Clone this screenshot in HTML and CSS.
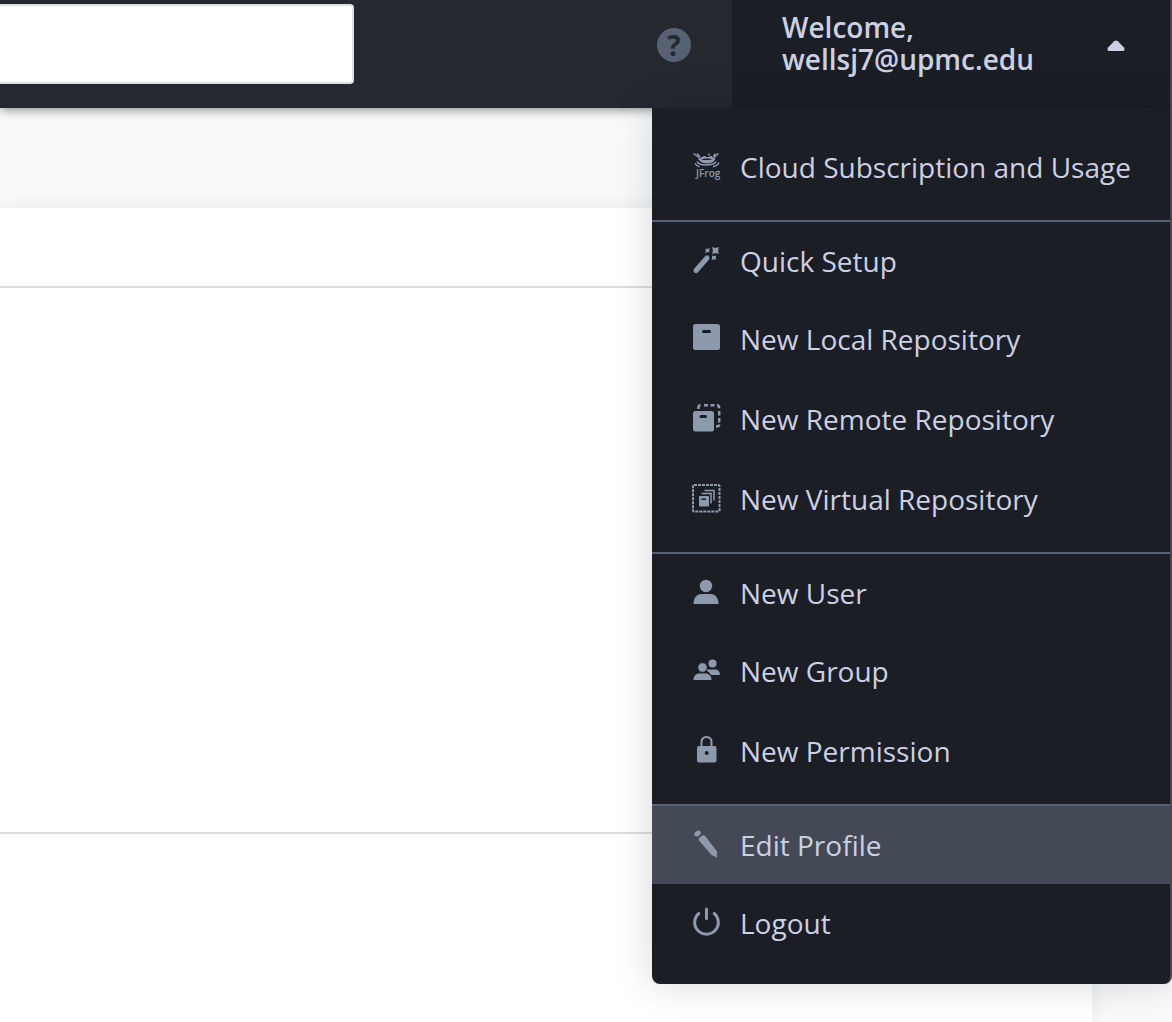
FILE: index.html
```html
<!DOCTYPE html>
<html lang="en">
<head>
<meta charset="utf-8">
<title>Profile menu</title>
<meta name="viewport" content="width=device-width, initial-scale=1">
<link rel="stylesheet" href="styles.css">
</head>
<body>
<header class="topbar">
  <input class="search" type="search" aria-label="Search">
  <button class="help" type="button" aria-label="Help">?</button>
  <div class="account">
    <button class="account-toggle" type="button" aria-expanded="true">
      <span class="account-name">Welcome, wellsj7@upmc.edu</span>
      <svg class="caret" viewBox="0 0 18 12" aria-hidden="true"><path d="M7.200 1.200Q9 0 10.800 1.200L17 7.500Q18.500 11 15.500 11H2.500Q-.5 11 1 7.500Z"/></svg>
    </button>
    <nav class="menu" aria-label="Account">
      <ul class="group">
        <li><a class="item" href="#">
          <svg class="icon" viewBox="0 0 28 28" aria-hidden="true"><path d="M6 7q1.500-2 4-1.800L11.500 4h1.500l1 1h3l1-1h2l.5 1.200Q23 5.500 23.500 7L21 10q-6 3-12 0z"/><path class="cut" d="M9 7.200q5.500-1.200 11.500 0-5.500 1.800-11.500 0z"/><path class="line thin" d="M1.500 1.500l5.500 4M5 1.500l3 3.500M26.500 1.500l-4.500 4M23.500 1.500l-2 3M5 9.500c1 2.500 4.500 3.500 9 3.500s9-1 10-3.500M3 11.500c1 2 2.500 2.500 4.500 3.300M27 10.500c-1 2.500-3 3.300-6 4.200"/><circle cx="17" cy="2.500" r="1"/><text x="4" y="25">JFrog</text></svg>
          <span>Cloud Subscription and Usage</span></a></li>
      </ul>
      <ul class="group">
        <li><a class="item" href="#">
          <svg class="icon" viewBox="0 0 28 28" aria-hidden="true"><path class="line stick" d="M4 24.500L15 12"/><path d="M20 1l2.300.7h2.400L27 1l-.7 2.300v2.400L27 8l-2.300-.7h-2.400L20 8l.7-2.300V3.300zM13.500 2.500l2 .6L18 2l-.9 2.500.6 2-2-.4-2.700.9.800-2.500zM20 9.500l2 .5 2.300-.6-.6 2.300.4 2-2.200-.4-2.400.7.6-2.300z"/></svg>
          <span>Quick Setup</span></a></li>
        <li><a class="item" href="#">
          <svg class="icon" viewBox="0 0 28 28" aria-hidden="true"><rect x="1" y="0" width="27" height="26" rx="2.500"/><rect class="cut" x="10" y="6" width="9" height="3" rx="1.500"/></svg>
          <span>New Local Repository</span></a></li>
        <li><a class="item" href="#">
          <svg class="icon" viewBox="0 0 28 28" aria-hidden="true"><rect x="1" y="7" width="21" height="20.500" rx="2.500"/><rect class="cut" x="7.500" y="11" width="7.500" height="3" rx="1.500"/><path class="line bold" d="M6.500 5V3Q6.500 1.300 8.500 1.300M12 1.300h4M18.500 1.300h4M25 1.300q2.200 0 2.200 3M27.200 7v4.500M27.200 14v4.500M27.200 20.500q0 2-3.200 2"/></svg>
          <span>New Remote Repository</span></a></li>
        <li><a class="item" href="#">
          <svg class="icon" viewBox="0 0 28 28" aria-hidden="true"><rect class="line dashed" x="1" y="1" width="26.500" height="26.500" rx="1"/><rect x="7" y="12" width="10" height="10.500" rx="1"/><rect class="cut" x="9.500" y="14.500" width="4.500" height="1.500"/><path class="line thin" d="M9.500 9.500h9.500v10M12.500 6.500h9.500v10"/></svg>
          <span>New Virtual Repository</span></a></li>
      </ul>
      <ul class="group">
        <li><a class="item" href="#">
          <svg class="icon" viewBox="0 0 28 28" aria-hidden="true"><circle cx="14" cy="8" r="6.200"/><path d="M1.500 26c0-7 4-10 8-10h9c4 0 8 3 8 10z"/></svg>
          <span>New User</span></a></li>
        <li><a class="item" href="#">
          <svg class="icon" viewBox="0 0 28 28" aria-hidden="true"><circle cx="20.500" cy="7.500" r="4"/><path d="M15 13.500h8c3 0 5 2 5 5.500h-9c-1-2-2-3-4-4z"/><circle class="halo" cx="10.500" cy="11.500" r="4.800"/><path d="M1.500 24c0-4 2.500-6.500 6-6.500h6c3.500 0 6 2.500 6 6.500z"/></svg>
          <span>New Group</span></a></li>
        <li><a class="item" href="#">
          <svg class="icon" viewBox="0 0 28 28" aria-hidden="true"><path class="line" d="M9.500 11V6.500q0-5.500 5-5.500t5 5.500V11"/><rect x="5" y="10" width="19.500" height="16.500" rx="2"/><circle class="cut" cx="14.700" cy="17" r="2"/></svg>
          <span>New Permission</span></a></li>
      </ul>
      <ul class="group">
        <li><a class="item active" href="#">
          <svg class="icon" viewBox="0 0 28 28" aria-hidden="true"><ellipse cx="5.500" cy="3.500" rx="3.500" ry="2.500" transform="rotate(-35 5.500 3.500)"/><path d="M7.500 7.500l3-2q1.500-.7 3 1L25 21.500v6l-5.500-2.500L7 10.500q-1-2 .5-3z"/></svg>
          <span>Edit Profile</span></a></li>
        <li><a class="item" href="#">
          <svg class="icon" viewBox="0 0 28 28" aria-hidden="true"><path class="line power" d="M14.500 1v9.500M6.800 5.500A11.800 11.800 0 1 0 22.200 5.500"/></svg>
          <span>Logout</span></a></li>
      </ul>
    </nav>
  </div>
</header>
<main class="page">
  <section class="panel">
    <div class="panel-head"></div>
    <div class="panel-body"></div>
    <div class="panel-foot"></div>
  </section>
</main>
</body>
</html>
```
FILE: styles.css
```css
* { box-sizing: border-box; }

body {
  display: flex;
  flex-direction: column;
  min-height: 100vh;
  margin: 0;
  background: #f8fafc;
  color: #cbd0e4;
  font: 28px/32px "Open Sans", "Noto Sans", sans-serif;
}

button {
  border: 0;
  color: inherit;
  font: inherit;
  cursor: pointer;
}

.topbar {
  position: relative;
  z-index: 1;
  display: flex;
  align-items: stretch;
  height: 108px;
  background: #25282f;
  box-shadow: 0 0 12px rgba(0, 0, 0, .6);
}

.search {
  width: 354px;
  height: 80px;
  margin: 4px auto 0 0;
  padding: 0 24px;
  border: 2px solid #dcdfe4;
  border-left: 0;
  border-radius: 0 4px 4px 0;
  background: #fff;
  font: inherit;
}

.help {
  align-self: center;
  width: 34px;
  height: 34px;
  margin: 0 41px 18px 0;
  padding: 0;
  border-radius: 50%;
  background: #566274;
  color: #25282f;
  font-size: 28px;
  font-weight: 700;
}

.account {
  position: relative;
  width: 440px;
}

.account-toggle {
  display: flex;
  align-items: flex-start;
  justify-content: space-between;
  width: 100%;
  height: 108px;
  padding: 11px 45px 0 50px;
  border-right: 2px solid #47484b;
  background: #1b1e25;
  font-weight: 600;
  text-align: left;
}

.account-name { width: 260px; }

.caret {
  width: 18px;
  height: 12px;
  margin-top: 29px;
  fill: #cbd0e4;
}

.menu {
  position: absolute;
  top: 100%;
  right: 0;
  width: 520px;
  padding: 20px 0 8px;
  border-right: 2px solid #47484b;
  border-radius: 0 0 8px 8px;
  background: #1b1e25;
  box-shadow: 0 0 40px rgba(0, 0, 0, .16);
}

.group {
  margin: 0;
  padding: 0 0 12px;
  list-style: none;
}

.item {
  display: flex;
  align-items: center;
  gap: 20px;
  height: 80px;
  padding: 0 0 2px 40px;
  color: inherit;
  text-decoration: none;
  white-space: nowrap;
}

.group + .group > :first-child .item {
  padding-bottom: 0;
  border-top: 2px solid #566274;
}

.item.active { background: #444956; }

.icon {
  flex: none;
  width: 28px;
  height: 28px;
  margin-bottom: 2px;
  overflow: visible;
  fill: #8d9aae;
  color: #8d9aae;
}

.icon .cut { fill: #1b1e25; }
.icon .halo { stroke: #1b1e25; stroke-width: 1; }

.icon .line {
  fill: none;
  stroke: currentColor;
  stroke-width: 2;
}

.icon .thin { stroke-width: 1.5; }
.icon .bold { stroke-width: 2.5; }
.icon .stick { stroke-width: 5; stroke-linecap: round; }
.icon .power { stroke-width: 3; stroke-linecap: round; }
.icon .dashed { stroke-dasharray: 3 1; }

.icon text {
  font: 600 10px "Open Sans", sans-serif;
}

.page {
  display: flex;
  flex: 1;
  padding: 100px 80px 0 0;
}

.panel {
  display: flex;
  flex: 1;
  flex-direction: column;
  background: #fff;
  box-shadow: 0 0 20px rgba(0, 0, 0, .08);
}

.panel-head {
  height: 80px;
  border-bottom: 2px solid #dcdcdc;
}

.panel-body {
  height: 546px;
  border-bottom: 2px solid #dcdcdc;
}

.panel-foot { flex: 1; }
```
